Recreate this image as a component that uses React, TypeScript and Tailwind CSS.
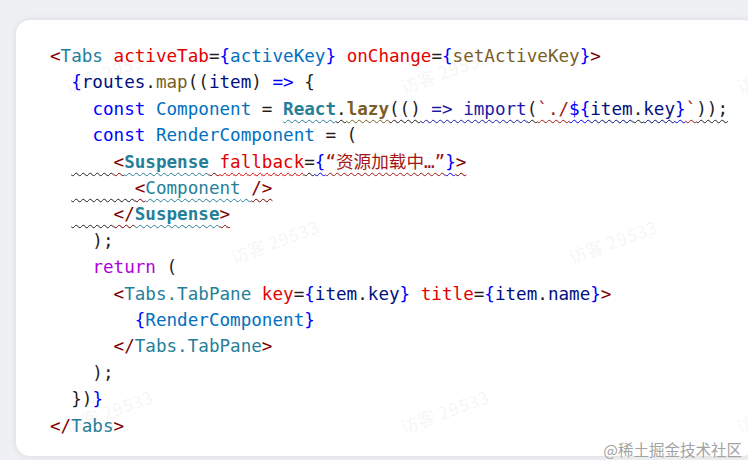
import React from "react";

type Tok = [string, string];

// colour classes (VS Code light theme-ish)
const TAG = "text-[#800000]";
const NAME = "text-[#267f99]";
const ATTR = "text-[#e50000]";
const P = "text-[#1f1f1f]";
const BR = "text-[#0000ff]";
const VAR = "text-[#0070c1]";
const FN = "text-[#795e26]";
const ID = "text-[#001080]";
const KW = "text-[#0000ff]";
const CTRL = "text-[#af00db]";
const STR = "text-[#a31515]";
const W = " underline decoration-wavy decoration-1 underline-offset-[4px]";

const lines: Tok[][] = [
  [
    ["<", TAG],
    ["Tabs", NAME],
    [" ", P],
    ["activeTab", ATTR],
    ["=", P],
    ["{", BR],
    ["activeKey", VAR],
    ["}", BR],
    [" ", P],
    ["onChange", ATTR],
    ["=", P],
    ["{", BR],
    ["setActiveKey", FN],
    ["}", BR],
    [">", TAG],
  ],
  [
    ["  ", P],
    ["{", BR],
    ["routes", ID],
    [".", P],
    ["map", FN],
    ["((", P],
    ["item", ID],
    [") ", P],
    ["=>", KW],
    [" {", P],
  ],
  [
    ["    ", P],
    ["const", KW],
    [" ", P],
    ["Component", VAR],
    [" = ", P],
    ["React", NAME + " font-bold" + W],
    [".", P + W],
    ["lazy", FN + " font-bold" + W],
    ["(()", P + W],
    [" => import", "text-[#1a1aa6]" + W],
    ["(", P + W],
    ["`./", STR + W],
    ["${", BR + W],
    ["item", ID + W],
    [".", P + W],
    ["key", ID + W],
    ["}", BR + W],
    ["`", STR + W],
    ["));", P + W],
  ],
  [
    ["    ", P],
    ["const", KW],
    [" ", P],
    ["RenderComponent", VAR],
    [" = (", P],
  ],
  [
    ["  ", P],
    ["    ", P + W],
    ["<", TAG + W],
    ["Suspense", NAME + " font-bold" + W],
    [" ", TAG + W],
    ["fallback", ATTR + W],
    ["=", P + W],
    ["{", BR + W],
    ["“资源加载中…”", STR + W],
    ["}", BR + W],
    [">", TAG + W],
  ],
  [
    ["  ", P],
    ["      ", P + W],
    ["<", TAG + W],
    ["Component", NAME + W],
    [" ", NAME + W],
    ["/>", TAG + W],
  ],
  [
    ["  ", P],
    ["    ", P + W],
    ["</", TAG + W],
    ["Suspense", NAME + " font-bold" + W],
    [">", TAG + W],
  ],
  [["    );", P]],
  [
    ["    ", P],
    ["return", CTRL],
    [" (", P],
  ],
  [
    ["      ", P],
    ["<", TAG],
    ["Tabs.TabPane", NAME],
    [" ", P],
    ["key", ATTR],
    ["=", P],
    ["{", BR],
    ["item", ID],
    [".", P],
    ["key", ID],
    ["}", BR],
    [" ", P],
    ["title", ATTR],
    ["=", P],
    ["{", BR],
    ["item", ID],
    [".", P],
    ["name", ID],
    ["}", BR],
    [">", TAG],
  ],
  [
    ["        ", P],
    ["{", BR],
    ["RenderComponent", VAR],
    ["}", BR],
  ],
  [
    ["      ", P],
    ["</", TAG],
    ["Tabs.TabPane", NAME],
    [">", TAG],
  ],
  [["    );", P]],
  [
    ["  })", P],
    ["}", BR],
  ],
  [
    ["</", TAG],
    ["Tabs", NAME],
    [">", TAG],
  ],
];

const marks = [
  { x: 62, y: 58 },
  { x: 398, y: 58 },
  { x: 734, y: 58 },
  { x: 228, y: 228 },
  { x: 566, y: 228 },
  { x: 62, y: 398 },
  { x: 398, y: 398 },
  { x: 734, y: 398 },
];

export default function App() {
  return (
    <div className="relative w-[748px] h-[460px] overflow-hidden bg-[#eef0f3]">
      <div className="ml-[16px] mt-[20px] w-[740px] h-[436px] rounded-[14px] bg-white shadow-[0_0_6px_rgba(0,0,0,0.10)] pl-[34px] pt-[23px]">
        <div className="font-['DejaVu_Sans_Mono','Noto_Sans_CJK_SC',monospace] text-[17.6px] leading-[26.4px]">
          {lines.map((toks, i) => (
            <div key={i} className="whitespace-pre">
              {toks.map(([t, c], j) => (
                <span key={j} className={c}>
                  {t}
                </span>
              ))}
            </div>
          ))}
        </div>
      </div>

      {/* watermark overlay */}
      {marks.map((m, i) => (
        <div
          key={i}
          className="absolute -rotate-[20deg] whitespace-nowrap font-['Noto_Sans_CJK_SC',sans-serif] font-bold text-[18px] text-black/[0.035] pointer-events-none"
          style={{ left: m.x, top: m.y }}
        >
          访客 29533
        </div>
      ))}

      <div className="absolute right-[6px] bottom-[3px] font-['Noto_Sans_CJK_SC',sans-serif] text-[15.5px] leading-none text-[#a3a3a3] [text-shadow:0_0_2px_#fff]">
        @稀土掘金技术社区
      </div>
    </div>
  );
}
